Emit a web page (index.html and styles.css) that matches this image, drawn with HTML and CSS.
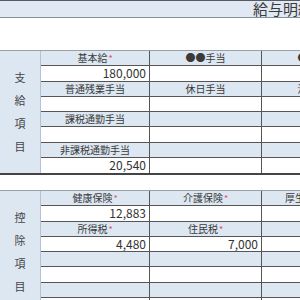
FILE: index.html
```html
<!DOCTYPE html>
<html lang="ja">
<head>
<meta charset="utf-8">
<link rel="stylesheet" href="styles.css">
</head>
<body>
<div class="page">
  <div class="title">給与明細書</div>
  <div class="blank"></div>

  <div class="group">
    <div class="side"><span>支</span><span>給</span><span>項</span><span>目</span></div>
    <div class="cells">
      <div class="cell head">基本給<i class="req">*</i></div>
      <div class="cell head">●●手当</div>
      <div class="cell head">●●手当</div>
      <div class="cell val">180,000</div>
      <div class="cell val"></div>
      <div class="cell val"></div>
      <div class="cell head">普通残業手当</div>
      <div class="cell head">休日手当</div>
      <div class="cell head">深夜手当</div>
      <div class="cell val"></div>
      <div class="cell val"></div>
      <div class="cell val"></div>
      <div class="cell head">課税通勤手当</div>
      <div class="cell head"></div>
      <div class="cell head"></div>
      <div class="cell val"></div>
      <div class="cell val"></div>
      <div class="cell val"></div>
      <div class="cell head">非課税通勤手当</div>
      <div class="cell head"></div>
      <div class="cell head"></div>
      <div class="cell val last">20,540</div>
      <div class="cell val last"></div>
      <div class="cell val last"></div>
    </div>
  </div>

  <div class="group second">
    <div class="side"><span>控</span><span>除</span><span>項</span><span>目</span></div>
    <div class="cells">
      <div class="cell head">健康保険<i class="req">*</i></div>
      <div class="cell head">介護保険<i class="req">*</i></div>
      <div class="cell head">厚生年金保険<i class="req">*</i></div>
      <div class="cell val">12,883</div>
      <div class="cell val"></div>
      <div class="cell val"></div>
      <div class="cell head">所得税<i class="req">*</i></div>
      <div class="cell head">住民税<i class="req">*</i></div>
      <div class="cell head"></div>
      <div class="cell val">4,480</div>
      <div class="cell val">7,000</div>
      <div class="cell val"></div>
      <div class="cell head"></div>
      <div class="cell head"></div>
      <div class="cell head"></div>
      <div class="cell val"></div>
      <div class="cell val"></div>
      <div class="cell val"></div>
      <div class="cell head"></div>
      <div class="cell head"></div>
      <div class="cell head"></div>
      <div class="cell val last"></div>
      <div class="cell val last"></div>
      <div class="cell val last"></div>
    </div>
  </div>
</div>
</body>
</html>
```
FILE: styles.css
```css
html, body {
  margin: 0;
  padding: 0;
  background: #ffffff;
}
body {
  font-family: "Noto Sans CJK JP", "Noto Sans", sans-serif;
  color: #333333;
  overflow: hidden;
}
.page {
  width: 300px;
  overflow: hidden;
}
.title {
  box-sizing: border-box;
  height: 18px;
  border-top: 1px solid #555a60;
  border-bottom: 1px solid #8a9098;
  background: #dfe8f3;
  padding-left: 253px;
  font-size: 15px;
  line-height: 16px;
  white-space: nowrap;
  color: #3a3a3a;
}
.blank {
  height: 32px;
}
.group {
  display: grid;
  grid-template-columns: 41px 333px;
  border-top: 1px solid #9aa0a8;
  border-bottom: 2px solid #444;
  width: 374px;
}
.second {
  margin-top: 15px;
}
.side {
  background: #dde7f2;
  border-right: 1px solid #b4c2d2;
  display: flex;
  flex-direction: column;
  align-items: center;
  justify-content: center;
  font-size: 11px;
  line-height: 23px;
  color: #444;
}
.cells {
  display: grid;
  grid-template-columns: 109px 112px 112px;
  grid-auto-rows: 15.25px;
}
.cell {
  box-sizing: border-box;
  border-right: 1px solid #555;
  border-bottom: 1px solid #555;
  white-space: nowrap;
}
.cell.last {
  border-bottom: none;
}
.head {
  background: #dde7f2;
  font-size: 10px;
  line-height: 14px;
  text-align: center;
  color: #3a3a3a;
}
.val {
  background: #ffffff;
  font-size: 12px;
  line-height: 14px;
  text-align: right;
  padding-right: 3px;
  color: #333;
}
.req {
  font-style: normal;
  color: #e0506a;
  font-size: 9px;
  margin-left: 1px;
}
```
